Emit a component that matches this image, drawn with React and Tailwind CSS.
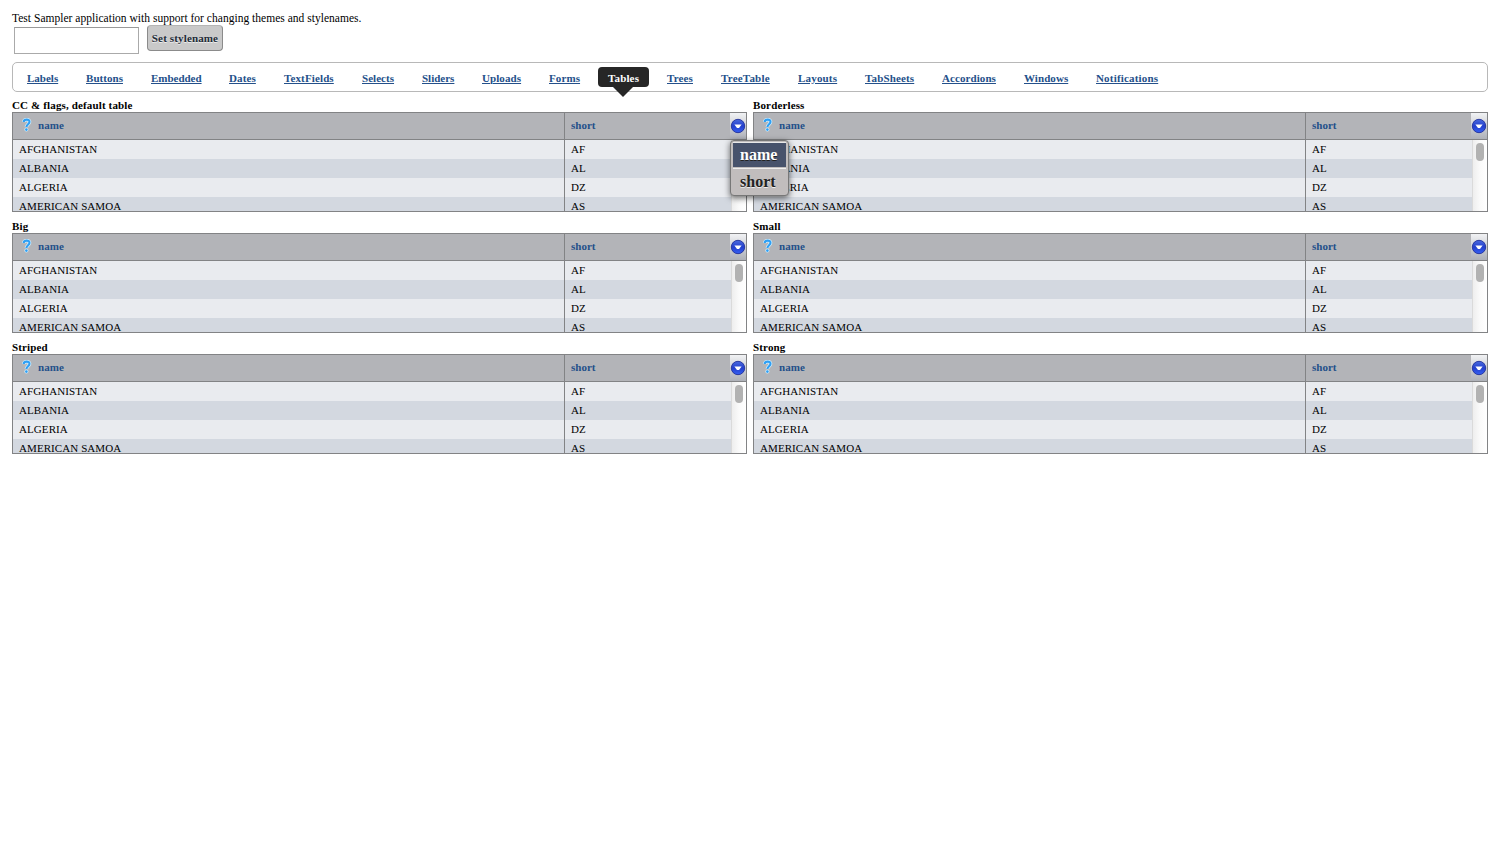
import React from "react";

const tabs = [
  ["Labels", "w-[31px]"],
  ["Buttons", "w-[37px] tracking-[0.04px]"],
  ["Embedded", "w-[50px] -tracking-[0.02px]"],
  ["Dates", "w-[27px] tracking-[0.12px]"],
  ["TextFields", "w-[50px] tracking-[0.13px]"],
  ["Selects", "w-[32px] tracking-[0.04px]"],
  ["Sliders", "w-[32px]"],
  ["Uploads", "w-[39px] tracking-[0.08px]"],
  ["Forms", "w-[31px] tracking-[0.1px]"],
  ["Tables", "w-[31px] tracking-[0.15px]"],
  ["Trees", "w-[26px] tracking-[0.15px]"],
  ["TreeTable", "w-[49px] tracking-[0.22px]"],
  ["Layouts", "w-[39px] tracking-[0.18px]"],
  ["TabSheets", "w-[49px] tracking-[0.15px]"],
  ["Accordions", "w-[54px] tracking-[0.08px]"],
  ["Windows", "w-[44px] tracking-[0.06px]"],
  ["Notifications", "w-[62px] tracking-[0.18px]"],
];

const rows = [
  ["AFGHANISTAN", "AF"],
  ["ALBANIA", "AL"],
  ["ALGERIA", "DZ"],
  ["AMERICAN SAMOA", "AS"],
];

const tables = ["CC & flags, default table", "Borderless", "Big", "Small", "Striped", "Strong"];

function HelpIcon() {
  return (
    <svg width="10" height="14" viewBox="0 0 10 14" className="relative -top-px block" fill="none">
      <path d="M1.7 4C2 .9 7.6 .9 7.5 3.9C7.4 6.2 4.6 6.3 4.4 9" stroke="#d3effc" strokeWidth="3.6" />
      <circle cx="4.4" cy="11.6" r="2" fill="#d3effc" />
      <path d="M1.7 4C2 .9 7.6 .9 7.5 3.9C7.4 6.2 4.6 6.3 4.4 9" stroke="#2f9ff4" strokeWidth="2.1" />
      <circle cx="4.4" cy="11.6" r="1.3" fill="#2f9ff4" />
    </svg>
  );
}

function ColumnSelector() {
  return (
    <div className="flex h-[26px] w-4 items-center justify-center bg-linear-to-b from-[#f1f2f4] to-[#aeb1b8]">
      <svg width="16" height="16" viewBox="0 0 16 16" className="block">
        <defs>
          <linearGradient id="orb" x1="0" y1="0" x2="0" y2="1">
            <stop offset="0" stopColor="#4a6be0" />
            <stop offset="0.5" stopColor="#2440cc" />
            <stop offset="1" stopColor="#3560f4" />
          </linearGradient>
        </defs>
        <circle cx="8" cy="8" r="6.7" fill="url(#orb)" stroke="#20309a" strokeWidth="0.9" />
        <path d="M4.4 6.5h7.2L9 10H7z" fill="#fff" />
      </svg>
    </div>
  );
}

function ColumnMenu() {
  return (
    <div className="absolute top-[41px] left-[718px] z-10 h-[56px] w-[59px] rounded-[4px] border border-[#777] bg-[#c1bdbd] px-[2px] pt-[1px] text-[16px] font-bold shadow-[0_2px_6px_rgba(0,0,0,0.6)]">
      <div className="h-[25px] border-t border-[#e8e8e8] bg-[#47526b] pl-[7px] leading-[24px] text-white [text-shadow:0_1px_0_#222]">name</div>
      <div className="mt-[1px] h-[25px] border-t border-[#eeeeee] pl-[7px] leading-[26px] text-[#222] [text-shadow:0_1px_0_#eee]">short</div>
    </div>
  );
}

function Table({ caption, first }) {
  return (
    <section className="relative h-[121px] w-[735px]">
      <h2 className="h-[13px] text-[11px] leading-[13px] font-bold tracking-[0.14px] text-black">{caption}</h2>
      <div className="h-[100px] overflow-hidden border border-[#828385]">
        <div className="flex h-[27px] border-b border-[#828385] bg-[#b3b4b8] leading-[25px] font-bold text-[#24508a]">
          <div className="flex w-[552px] items-center border-r border-[#828385] pl-[9px]">
            <HelpIcon />
            <span className="ml-[6px] h-[26px] tracking-[0.1px]">name</span>
          </div>
          <div className="flex-1 pl-[6px]">short</div>
          <ColumnSelector />
        </div>
        <div className="flex">
          <div className="w-[718px]">
            {rows.map(([name, code], i) => (
              <div key={name} className={i % 2 ? "flex h-[19px] bg-[#d3d8e0]" : "flex h-[19px] bg-[#e9ebef]"}>
                <div className="w-[552px] border-r border-[#828385] pl-[6px] leading-[19px] tracking-[0.08px]">{name}</div>
                <div className="pl-[6px] leading-[19px]">{code}</div>
              </div>
            ))}
          </div>
          <div className="flex flex-1 border-l border-[#dadada] bg-linear-to-r from-[#eeeeee] via-[#fafafa] to-white pt-[3px] pl-[3px]">
            {!first && <div className="h-[18px] w-2 rounded-full bg-[#b2b2b2]" />}
          </div>
        </div>
      </div>
      {first && <ColumnMenu />}
    </section>
  );
}

export default function App() {
  return (
    <main className="h-[850px] w-[1500px] overflow-hidden bg-white px-3 pt-3 font-['Liberation_Serif',serif] text-[11px] text-black">
      <p className="h-[13px] text-[11.5px] leading-[13px] tracking-[0.02px]">Test Sampler application with support for changing themes and stylenames.</p>
      <div className="flex h-[37px] items-start pl-[2px]">
        <input aria-label="Style name" className="mt-[2px] h-[27px] w-[125px] border border-[#aaa] border-t-[#999] bg-white" />
        <button className="ml-2 h-[26px] w-[76px] rounded-[4px] border border-[#8b8b8b] border-t-[#b5b5b5] bg-[#c9c9c9] pb-px text-center leading-[22px] font-bold tracking-[0.14px] whitespace-nowrap text-[#222b38] [text-shadow:0_1px_0_#eee]">Set stylename</button>
      </div>
      <nav className="flex h-[30px] items-start gap-2 rounded-[5px] border border-[#b8b8b8] pt-1 pl-1">
        {tabs.map(([label, fit]) => {
          const active = label === "Tables";
          return (
            <a key={label} className={active ? "relative h-5 rounded-[4px] bg-[#262626] px-[10px] leading-[23px] font-bold text-white" : "h-5 px-[10px] leading-[23px] font-bold text-[#24508a] underline"}>
              <span className={"block whitespace-nowrap " + fit}>{label}</span>
              {active && <svg className="absolute top-5 left-[15px]" width="20" height="10" viewBox="0 0 20 10"><path d="M0 0h20L10 10z" fill="#262626" /></svg>}
            </a>
          );
        })}
      </nav>
      <div className="mt-[7px] grid grid-cols-[735px_735px] gap-x-[6px]">
        {tables.map((caption, i) => (
          <Table key={caption} caption={caption} first={i === 0} />
        ))}
      </div>
    </main>
  );
}
